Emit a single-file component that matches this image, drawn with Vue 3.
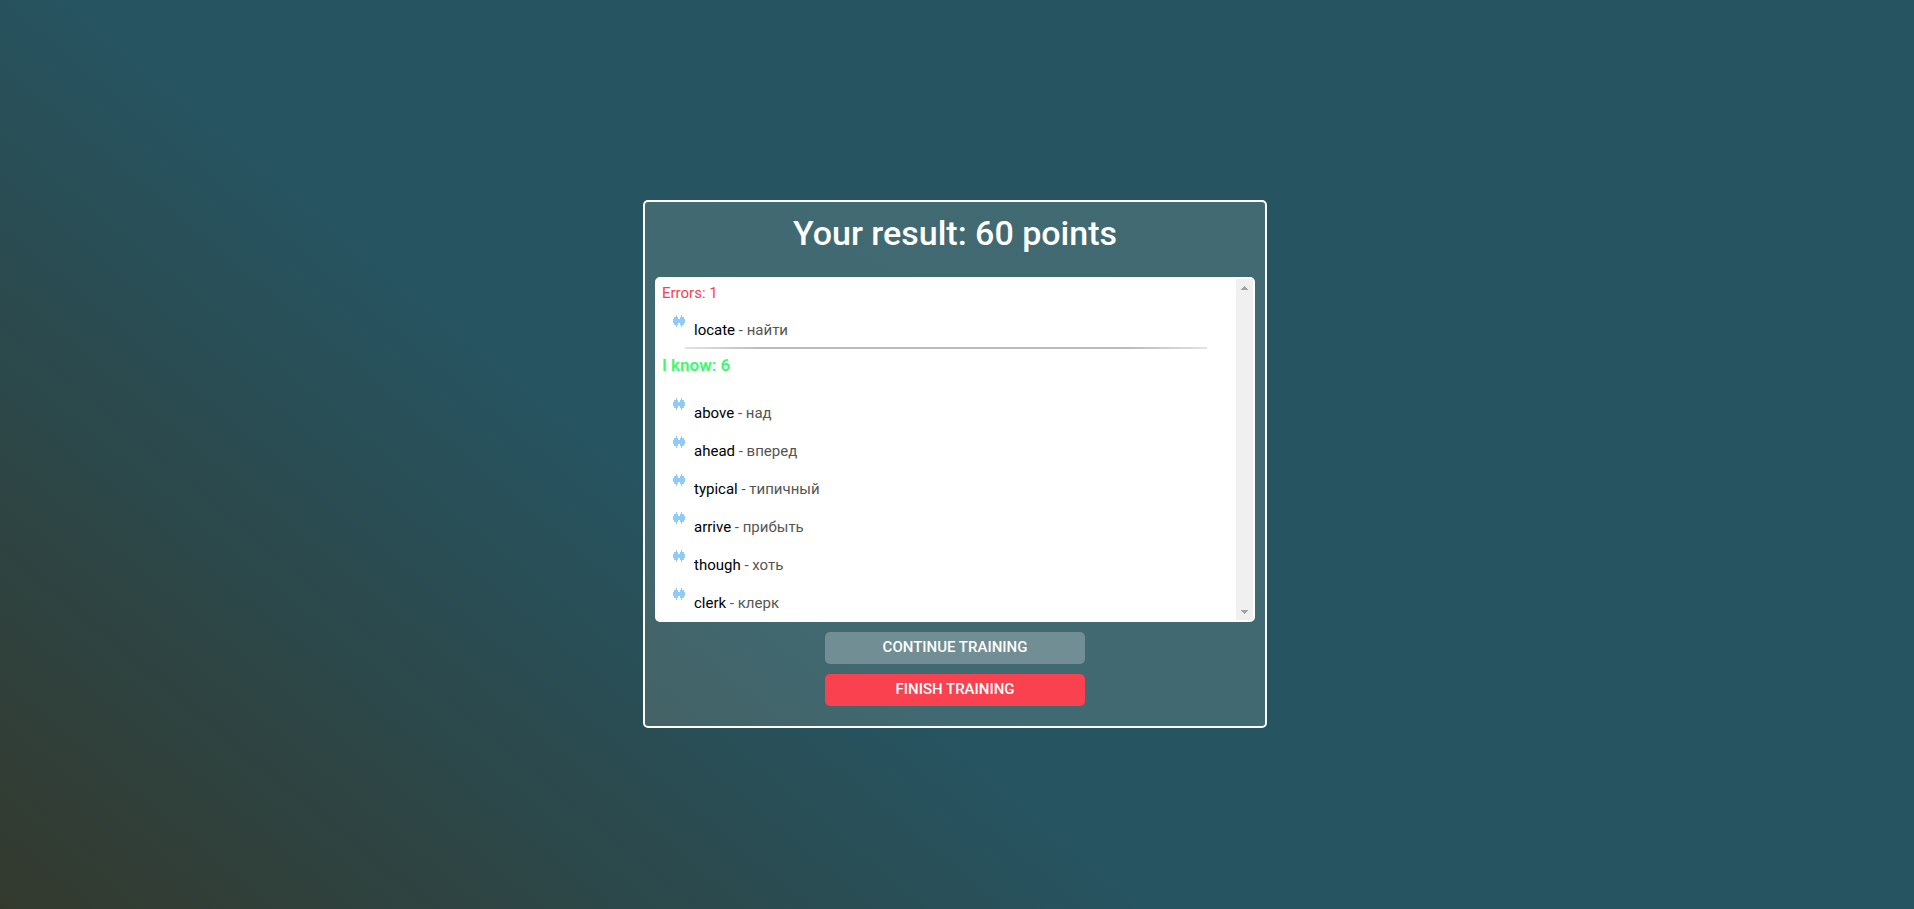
<script setup>
const errors = [{ word: 'locate', translation: 'найти' }]
const known = [
  { word: 'above', translation: 'над' },
  { word: 'ahead', translation: 'вперед' },
  { word: 'typical', translation: 'типичный' },
  { word: 'arrive', translation: 'прибыть' },
  { word: 'though', translation: 'хоть' },
  { word: 'clerk', translation: 'клерк' },
]
const groups = [
  { kind: 'wrong', label: 'Errors', items: errors },
  { kind: 'right', label: 'I know', items: known },
]
</script>

<template>
  <main class="page">
    <section class="card">
      <h1 class="title">Your result: 60 points</h1>
      <div class="results">
        <div class="content">
          <div v-for="group in groups" :key="group.kind" class="group" :class="group.kind">
            <h2 class="label">{{ group.label }}: {{ group.items.length }}</h2>
            <ul class="words">
              <li v-for="item in group.items" :key="item.word" class="row">
                <button class="sound" type="button" :aria-label="'Play ' + item.word">
                  <svg viewBox="0 0 12 12" width="12" height="12">
                    <path d="M0 4H1V2H3V0H4V2H5V4H7V2H8V0H9V2H11V4H12V8H11V10H9V12H8V10H7V8H5V10H4V12H3V10H1V8H0Z" fill="#90caf9" />
                  </svg>
                </button>
                <p class="pair"><span class="word">{{ item.word }}</span> - {{ item.translation }}</p>
              </li>
            </ul>
          </div>
        </div>
        <div class="scrollbar">
          <button type="button" class="arrow" aria-label="Scroll up">
            <svg viewBox="0 0 7 4" width="7" height="4"><path d="M3 0H4V1H5V2H6V3H7V4H0V3H1V2H2V1H3Z" fill="#a3a3a3" /></svg>
          </button>
          <button type="button" class="arrow" aria-label="Scroll down">
            <svg viewBox="0 0 7 4" width="7" height="4"><path d="M0 0H7V1H6V2H5V3H4V4H3V3H2V2H1V1H0Z" fill="#a3a3a3" /></svg>
          </button>
        </div>
      </div>
      <div class="actions">
        <button type="button" class="action">Continue training</button>
        <button type="button" class="action finish">Finish training</button>
      </div>
    </section>
  </main>
</template>

<style>
body {
  margin: 0;
}
</style>

<style scoped>
.page {
  box-sizing: border-box;
  min-height: 100vh;
  padding: 19px 4px 0 0;
  display: flex;
  align-items: center;
  justify-content: center;
  background: linear-gradient(40deg, #33392d 0%, #265461 39%, #265561 100%);
  font-family: Roboto, "Liberation Sans", sans-serif;
  font-size: 15px;
  line-height: 24px;
}
.card {
  box-sizing: border-box;
  width: 624px;
  max-width: 100%;
  padding: 10px 10px 20px;
  border: 2px solid #fff;
  border-radius: 5px;
  background: rgba(245, 245, 225, 0.13);
}
.title {
  margin: 0 0 23px;
  color: #fff;
  font-size: 34px;
  line-height: 42px;
  font-weight: 500;
  text-align: center;
}
.results {
  display: flex;
  border: 2px solid #fff;
  border-radius: 5px;
  background: #fff;
}
.content {
  flex: 1;
  padding: 2px 5px 6px;
}
.label {
  margin: 0 0 10px;
  color: #f84150;
  font-size: 15px;
  font-weight: 400;
}
.right .label {
  margin-bottom: 21px;
  color: #3dfa6c;
  font-size: 17px;
  font-weight: 600;
}
.right::before {
  content: "";
  display: block;
  height: 2px;
  margin: 6px 24px 4px 23px;
  background: linear-gradient(90deg, #e3e3e3, #bbb 15%, #bbb 85%, #e3e3e3);
}
.words {
  margin: 0;
  padding: 0 0 0 11px;
  list-style: none;
  display: flex;
  flex-direction: column;
  gap: 12px;
}
.row {
  display: flex;
  gap: 9px;
  height: 26px;
}
.sound {
  display: block;
  width: 12px;
  height: 12px;
  padding: 0;
  border: 0;
  background: none;
}
.sound svg,
.arrow svg {
  display: block;
}
.pair {
  margin: 3px 0 0;
  color: #555;
}
.word {
  color: #000;
}
.scrollbar {
  width: 17px;
  display: flex;
  flex-direction: column;
  justify-content: space-between;
  background: #f0f0f0;
}
.arrow {
  display: flex;
  align-items: center;
  justify-content: center;
  width: 17px;
  height: 17px;
  padding: 0;
  border: 0;
  background: none;
}
.actions {
  display: flex;
  flex-direction: column;
  align-items: center;
  gap: 10px;
  padding-top: 10px;
}
.action {
  width: 260px;
  height: 32px;
  padding: 0 0 2px;
  border: 0;
  border-radius: 5px;
  background: rgba(255, 255, 255, 0.25);
  color: #fff;
  font: 500 15px/24px Roboto, "Liberation Sans", sans-serif;
  text-transform: uppercase;
}
.finish {
  background: #f94150;
}
</style>
